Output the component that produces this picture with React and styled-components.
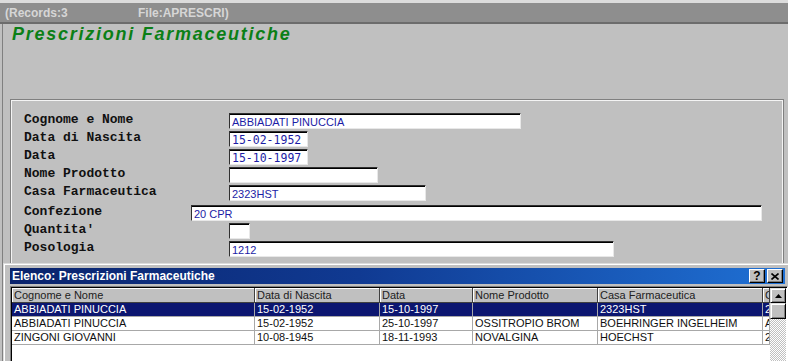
import React from "react";
import styled, { createGlobalStyle } from "styled-components";

const GlobalStyle = createGlobalStyle`
  html, body { margin: 0; padding: 0; background: #c0c0c0; overflow: hidden; }
  * { box-sizing: border-box; }
`;

const Screen = styled.div`
  width: 788px;
  height: 361px;
  overflow: hidden;
  display: flex;
  flex-direction: column;
  background: #c0c0c0;
  border-top: 3px solid #dcdcdc;
`;

const StatusBar = styled.div`
  flex: none;
  display: flex;
  align-items: center;
  background: #8e8e8e;
  border-bottom: 2px solid #6c6c6c;
  height: 21px;
  padding-left: 5px;
  font-family: "Liberation Sans", Arial, sans-serif;
  font-weight: bold;
  font-size: 12px;
  color: #d6d6d6;
`;

const StatusItem = styled.span`
  width: ${(p) => p.$w}px;
  flex: none;
  white-space: nowrap;
`;

const Main = styled.div`
  flex: 1;
  min-height: 0;
  display: flex;
  flex-direction: column;
  margin-left: 2px;
  border-left: 1px solid #808080;
`;

const Title = styled.h1`
  margin: 0;
  padding-left: 9px;
  height: 20px;
  line-height: 21px;
  font-family: "Liberation Sans", Arial, sans-serif;
  font-size: 18px;
  font-weight: bold;
  font-style: italic;
  letter-spacing: 1.75px;
  color: #0b7f16;
  white-space: nowrap;
`;

const FormPanel = styled.div`
  flex: none;
  margin: 55px 4px 0 7px;
  padding: 12px 0 5px 13px;
  border-top: 1px solid #808080;
  border-left: 1px solid #808080;
  border-right: 1px solid #808080;
  box-shadow: inset 1px 1px 0 #f4f4f4, inset -1px 0 0 #f4f4f4;
  display: flex;
  flex-direction: column;
`;

const FieldRow = styled.div`
  height: 18px;
  margin-top: ${(p) => (p.$extraTop ? 2 : 0)}px;
  display: flex;
  align-items: center;
`;

const FieldLabel = styled.span`
  width: ${(p) => p.$width}px;
  flex: none;
  padding-bottom: 3px;
  font-family: "Liberation Mono", "Courier New", monospace;
  font-weight: bold;
  font-size: 13px;
  color: #101010;
  white-space: nowrap;
`;

const FieldBox = styled.div`
  width: ${(p) => p.$width}px;
  height: 16px;
  flex: none;
  background: #ffffff;
  border-top: 1px solid #303030;
  border-left: 1px solid #303030;
  border-right: 1px solid #e8e8e8;
  border-bottom: 1px solid #e8e8e8;
  box-shadow: inset 0 1px 0 #000;
  padding: 1px 0 0 2px;
  font-family: ${(p) =>
    p.$mono
      ? `"DejaVu Sans Mono", "Liberation Mono", monospace`
      : `"Liberation Sans", Arial, sans-serif`};
  font-size: ${(p) => (p.$mono ? 11.5 : 11)}px;
  line-height: 14px;
  color: #1c1ca6;
  white-space: nowrap;
  overflow: hidden;
`;

const ListWindow = styled.div`
  flex: 1;
  min-height: 0;
  display: flex;
  flex-direction: column;
  padding: 4px 0 0 6px;
  border-top: 1px solid #dcdcdc;
  border-left: 1px solid #dcdcdc;
  box-shadow: inset 1px 1px 0 #ffffff;
`;

const TitleBar = styled.div`
  height: 16px;
  flex: none;
  margin-right: 3px;
  display: flex;
  align-items: center;
  justify-content: space-between;
  padding: 0 2px 0 2px;
  background: linear-gradient(90deg, #0a236c 0%, #103a92 45%, #1f70d4 100%);
`;

const TitleText = styled.span`
  font-family: "Liberation Sans", Arial, sans-serif;
  font-weight: bold;
  font-size: 12px;
  color: #ffffff;
  white-space: nowrap;
`;

const CaptionButtons = styled.div`
  display: flex;
  gap: 2px;
`;

const CaptionButton = styled.div`
  width: 16px;
  height: 14px;
  display: flex;
  align-items: center;
  justify-content: center;
  background: #c0c0c0;
  border-top: 1px solid #ffffff;
  border-left: 1px solid #ffffff;
  border-right: 1px solid #000000;
  border-bottom: 1px solid #000000;
  box-shadow: inset -1px -1px 0 #808080;
  font-family: "Liberation Sans", Arial, sans-serif;
  font-weight: bold;
  font-size: 12px;
  line-height: 12px;
  color: #000;
`;

const TableFrame = styled.div`
  flex: 1;
  min-height: 0;
  margin-top: 2px;
  display: flex;
  background: #ffffff;
  border-top: 1px solid #808080;
  border-left: 1px solid #808080;
  border-right: 1px solid #ffffff;
  box-shadow: inset 1px 1px 0 #000000;
  padding: 1px 0 0 1px;
`;

const TableBody = styled.div`
  width: 758px;
  flex: none;
  display: flex;
  flex-direction: column;
  overflow: hidden;
`;

const HeaderRow = styled.div`
  height: 15px;
  display: flex;
  flex: none;
`;

const HeaderCell = styled.div`
  width: ${(p) => p.$w}px;
  flex: none;
  background: #c0c0c0;
  border-right: 1px solid #404040;
  border-bottom: 1px solid #404040;
  box-shadow: inset 1px 1px 0 #ffffff;
  padding-left: 2px;
  font-family: "Liberation Sans", Arial, sans-serif;
  font-size: 11px;
  line-height: 14px;
  color: #202020;
  white-space: nowrap;
  overflow: hidden;
  text-overflow: clip;
`;

const DataRow = styled.div`
  height: 14px;
  display: flex;
  flex: none;
  background: ${(p) => (p.$selected ? "#0c1670" : "#ffffff")};
  color: ${(p) => (p.$selected ? "#ffffff" : "#101010")};
`;

const DataCell = styled.div`
  width: ${(p) => p.$w}px;
  flex: none;
  border-right: 1px solid #a8a8a8;
  border-bottom: 1px solid #a8a8a8;
  padding-left: 2px;
  font-family: "Liberation Sans", Arial, sans-serif;
  font-size: 11px;
  line-height: 13px;
  white-space: nowrap;
  overflow: hidden;
`;

const ScrollBar = styled.div`
  width: 16px;
  flex: none;
  display: flex;
  flex-direction: column;
`;

const ScrollButton = styled.div`
  height: 15px;
  flex: none;
  display: flex;
  align-items: center;
  justify-content: center;
  background: #c0c0c0;
  border-top: 1px solid #dfdfdf;
  border-left: 1px solid #dfdfdf;
  border-right: 1px solid #000;
  border-bottom: 1px solid #000;
  box-shadow: inset 1px 1px 0 #fff, inset -1px -1px 0 #808080;
`;

const ScrollThumb = styled.div`
  height: 16px;
  flex: none;
  background: #c0c0c0;
  border-top: 1px solid #dfdfdf;
  border-left: 1px solid #dfdfdf;
  border-right: 1px solid #000;
  border-bottom: 1px solid #000;
  box-shadow: inset 1px 1px 0 #fff, inset -1px -1px 0 #808080;
`;

const ScrollTrack = styled.div`
  flex: 1;
  background-color: #c0c0c0;
  background-image: repeating-conic-gradient(#ffffff 0 25%, #c0c0c0 0 50%);
  background-size: 2px 2px;
`;

const fields = [
  { label: "Cognome e Nome", value: "ABBIADATI PINUCCIA", box: 292 },
  { label: "Data di Nascita", value: "15-02-1952", box: 79, mono: true },
  { label: "Data", value: "15-10-1997", box: 79, mono: true },
  { label: "Nome Prodotto", value: "", box: 149 },
  { label: "Casa Farmaceutica", value: "2323HST", box: 197 },
  { label: "Confezione", value: "20 CPR", box: 571, labelWidth: 167, extraTop: true },
  { label: "Quantita'", value: "", box: 21 },
  { label: "Posologia", value: "1212", box: 385 },
];

const columns = [
  { key: "name", label: "Cognome e Nome", w: 243 },
  { key: "birth", label: "Data di Nascita", w: 125 },
  { key: "date", label: "Data", w: 93 },
  { key: "product", label: "Nome Prodotto", w: 125 },
  { key: "house", label: "Casa Farmaceutica", w: 165 },
  { key: "pack", label: "Confezione", w: 7 },
];

const rows = [
  { name: "ABBIADATI PINUCCIA", birth: "15-02-1952", date: "15-10-1997", product: "", house: "2323HST", pack: "20 CPR" },
  { name: "ABBIADATI PINUCCIA", birth: "15-02-1952", date: "25-10-1997", product: "OSSITROPIO BROM", house: "BOEHRINGER INGELHEIM", pack: "AEROSOL" },
  { name: "ZINGONI GIOVANNI", birth: "10-08-1945", date: "18-11-1993", product: "NOVALGINA", house: "HOECHST", pack: "20 CPR" },
];

export default function App() {
  return (
    <>
      <GlobalStyle />
      <Screen>
        <StatusBar>
          <StatusItem $w={133}>(Records:3</StatusItem>
          <StatusItem $w={200}>File:APRESCRI)</StatusItem>
        </StatusBar>
        <Main>
          <Title>Prescrizioni Farmaceutiche</Title>
          <FormPanel>
            {fields.map((f) => (
              <FieldRow key={f.label} $extraTop={f.extraTop}>
                <FieldLabel $width={f.labelWidth || 205}>{f.label}</FieldLabel>
                <FieldBox $width={f.box} $mono={f.mono}>
                  {f.value}
                </FieldBox>
              </FieldRow>
            ))}
          </FormPanel>
          <ListWindow>
            <TitleBar>
              <TitleText>Elenco: Prescrizioni Farmaceutiche</TitleText>
              <CaptionButtons>
                <CaptionButton>?</CaptionButton>
                <CaptionButton>
                  <svg width="8" height="7" viewBox="0 0 8 7">
                    <path d="M0.5 0.5 L7.5 6.5 M7.5 0.5 L0.5 6.5" stroke="#000" strokeWidth="1.6" />
                  </svg>
                </CaptionButton>
              </CaptionButtons>
            </TitleBar>
            <TableFrame>
              <TableBody>
                <HeaderRow>
                  {columns.map((c) => (
                    <HeaderCell key={c.key} $w={c.w}>
                      {c.label}
                    </HeaderCell>
                  ))}
                </HeaderRow>
                {rows.map((r, i) => (
                  <DataRow key={i} $selected={i === 0}>
                    {columns.map((c) => (
                      <DataCell key={c.key} $w={c.w}>
                        {r[c.key]}
                      </DataCell>
                    ))}
                  </DataRow>
                ))}
              </TableBody>
              <ScrollBar>
                <ScrollButton>
                  <svg width="7" height="4" viewBox="0 0 7 4">
                    <polygon points="3.5,0 7,4 0,4" fill="#000" />
                  </svg>
                </ScrollButton>
                <ScrollThumb />
                <ScrollTrack />
              </ScrollBar>
            </TableFrame>
          </ListWindow>
        </Main>
      </Screen>
    </>
  );
}
